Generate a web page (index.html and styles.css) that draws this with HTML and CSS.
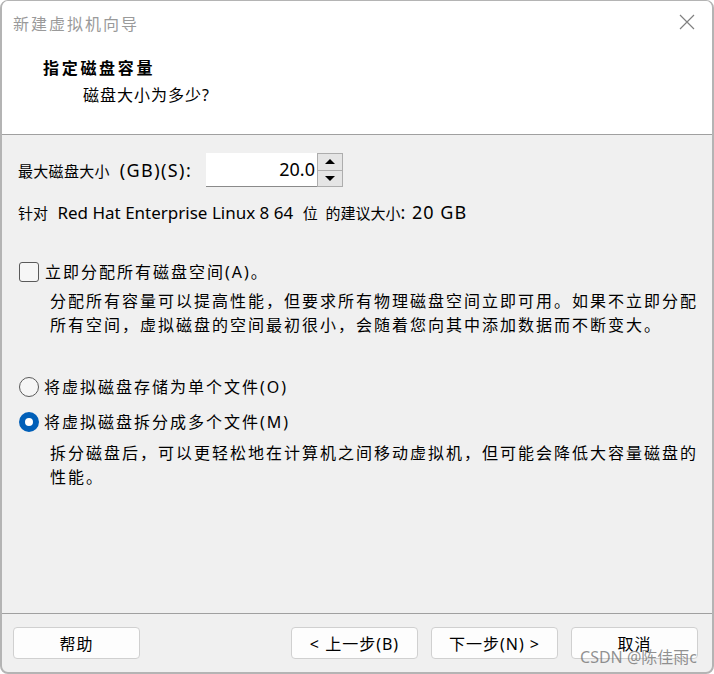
FILE: index.html
```html
<!DOCTYPE html>
<html lang="zh-CN">
<head>
  <meta charset="UTF-8" />
  <title>新建虚拟机向导</title>
  <link rel="stylesheet" href="styles.css">
</head>
<body>
<div class="window">
  <div class="titlebar">
    <span class="title">新建虚拟机向导</span>
    <svg class="close" width="16" height="16" viewBox="0 0 16 16">
      <path d="M1 1 L15 15 M15 1 L1 15" stroke="#808080" stroke-width="1.2" fill="none"/>
    </svg>
  </div>

  <div class="header">
    <div class="head-title">指定磁盘容量</div>
    <div class="head-sub">磁盘大小为多少?</div>
  </div>

  <div class="content">
    <div class="size-row">
      <span class="size-label">最大磁盘大小<span class="lat-lg">(GB)(S):</span></span>
      <div class="spin">
        <div class="spin-field">20.0</div>
        <div class="spin-arrows">
          <div class="arrow"><span class="tri up"></span></div>
          <div class="arrow"><span class="tri down"></span></div>
        </div>
      </div>
    </div>
    <div class="hint">针对<span class="lat pad"> Red Hat Enterprise Linux 8 64 </span>位 <span class="gap">的建议大小</span><span class="lat wide">: 20 GB</span></div>

    <label class="opt check-opt"><span class="checkbox"></span>立即分配所有磁盘空间(A)。</label>
    <p class="desc">分配所有容量可以提高性能，但要求所有物理磁盘空间立即可用。如果不立即分配所有空间，虚拟磁盘的空间最初很小，会随着您向其中添加数据而不断变大。</p>

    <label class="opt radio-first"><span class="radio"></span>将虚拟磁盘存储为单个文件(O)</label>
    <label class="opt radio-second"><span class="radio checked"></span>将虚拟磁盘拆分成多个文件(M)</label>
    <p class="desc desc-2">拆分磁盘后，可以更轻松地在计算机之间移动虚拟机，但可能会降低大容量磁盘的性能。</p>
  </div>

  <div class="footer">
    <button class="btn">帮助</button>
    <div class="spacer"></div>
    <button class="btn">&lt; 上一步(B)</button>
    <button class="btn">下一步(N) &gt;</button>
    <button class="btn">取消</button>
  </div>

  <div class="watermark">CSDN @陈佳雨c</div>
</div>
</body>
</html>
```

FILE: styles.css
```css
html, body {
  margin: 0;
  padding: 0;
  background: #fff;
}
body {
  font-family: "Noto Sans", "Noto Sans CJK SC", sans-serif;
  color: #000;
}
.window {
  position: relative;
  width: 714px;
  height: 674px;
  box-sizing: border-box;
  border: 2px solid #b4b4b4;
  border-top-width: 1px;
  border-radius: 8px;
  overflow: hidden;
  display: flex;
  flex-direction: column;
  background: #f0f0f0;
}
.titlebar {
  height: 43px;
  background: #fff;
  display: flex;
  align-items: center;
  padding: 0 17px 0 11px;
}
.title {
  flex: 1;
  font-size: 16px;
  letter-spacing: 2px;
  color: #9a9a9a;
}
.close {
  margin-top: -2px;
}
.header {
  background: #fff;
  padding: 12px 0 27px 41px;
  border-bottom: 1px solid #a0a0a0;
}
.head-title {
  font-size: 16px;
  font-weight: 700;
  letter-spacing: 2.7px;
  line-height: 24px;
}
.head-sub {
  font-size: 16px;
  letter-spacing: 1px;
  line-height: 24px;
  margin: 3px 0 0 40px;
}
.content {
  flex: 1;
  padding: 0 0 0 16px;
}
.size-row {
  display: flex;
  align-items: center;
  margin-top: 18px;
  height: 34px;
}
.size-label {
  font-size: 15px;
  letter-spacing: 0.3px;
  width: 188px;
  white-space: nowrap;
}
.lat-lg {
  font-size: 18px;
  letter-spacing: 1.4px;
  margin-left: 10px;
}
.lat {
  font-size: 17px;
}
.lat.pad {
  padding: 0 5px;
}
.lat.wide {
  font-size: 18px;
  letter-spacing: 1px;
}
.gap {
  margin-left: 4px;
}
.spin {
  display: flex;
  height: 34px;
}
.spin-field {
  width: 109px;
  height: 33px;
  background: #fff;
  border-bottom: 1px solid #8a8a8a;
  font-size: 18px;
  line-height: 32px;
  text-align: right;
  padding-right: 2px;
}
.spin-arrows {
  width: 24px;
  display: flex;
  flex-direction: column;
  border: 1px solid #adadad;
}
.arrow {
  flex: 1;
  background: #e5e5e5;
  display: flex;
  align-items: center;
  justify-content: center;
}
.arrow + .arrow {
  border-top: 1px solid #adadad;
}
.tri {
  width: 0;
  height: 0;
  border-left: 5px solid transparent;
  border-right: 5px solid transparent;
}
.tri.up {
  border-bottom: 5px solid #000;
}
.tri.down {
  border-top: 5px solid #000;
}
.hint {
  font-size: 15px;
  line-height: 24px;
  margin-top: 13px;
}
.opt {
  display: flex;
  align-items: center;
  font-size: 16px;
  letter-spacing: 2px;
  line-height: 24px;
}
.check-opt {
  margin-top: 35px;
}
.checkbox {
  width: 18px;
  height: 18px;
  border: 1px solid #5a5a5a;
  border-radius: 3px;
  background: #f6f6f6;
  margin: 0 6px 0 1px;
}
.desc {
  margin: 5px 0 0 32px;
  width: 656px;
  font-size: 16px;
  letter-spacing: 2px;
  line-height: 24px;
}
.radio-first {
  margin-top: 38px;
}
.radio-second {
  margin-top: 11px;
}
.radio {
  box-sizing: border-box;
  width: 20px;
  height: 20px;
  border: 1px solid #5a5a5a;
  border-radius: 50%;
  background: #f6f6f6;
  margin: 0 5px 0 1px;
}
.radio.checked {
  border: 6px solid #005fb8;
  background: #fff;
}
.desc-2 {
  margin-top: 7px;
}
.footer {
  display: flex;
  gap: 13px;
  border-top: 1px solid #a0a0a0;
  padding: 13px 14px 13px 11px;
}
.spacer {
  flex: 1;
}
.btn {
  width: 127px;
  height: 32px;
  background: #fdfdfd;
  border: 1px solid #d0d0d0;
  border-radius: 4px;
  font-family: "Noto Sans", "Noto Sans CJK SC", sans-serif;
  font-size: 16px;
  letter-spacing: 1px;
  color: #000;
  padding: 0;
}
.watermark {
  position: absolute;
  right: 15px;
  bottom: 4px;
  font-size: 16px;
  color: rgba(110, 110, 110, 0.75);
}
```
